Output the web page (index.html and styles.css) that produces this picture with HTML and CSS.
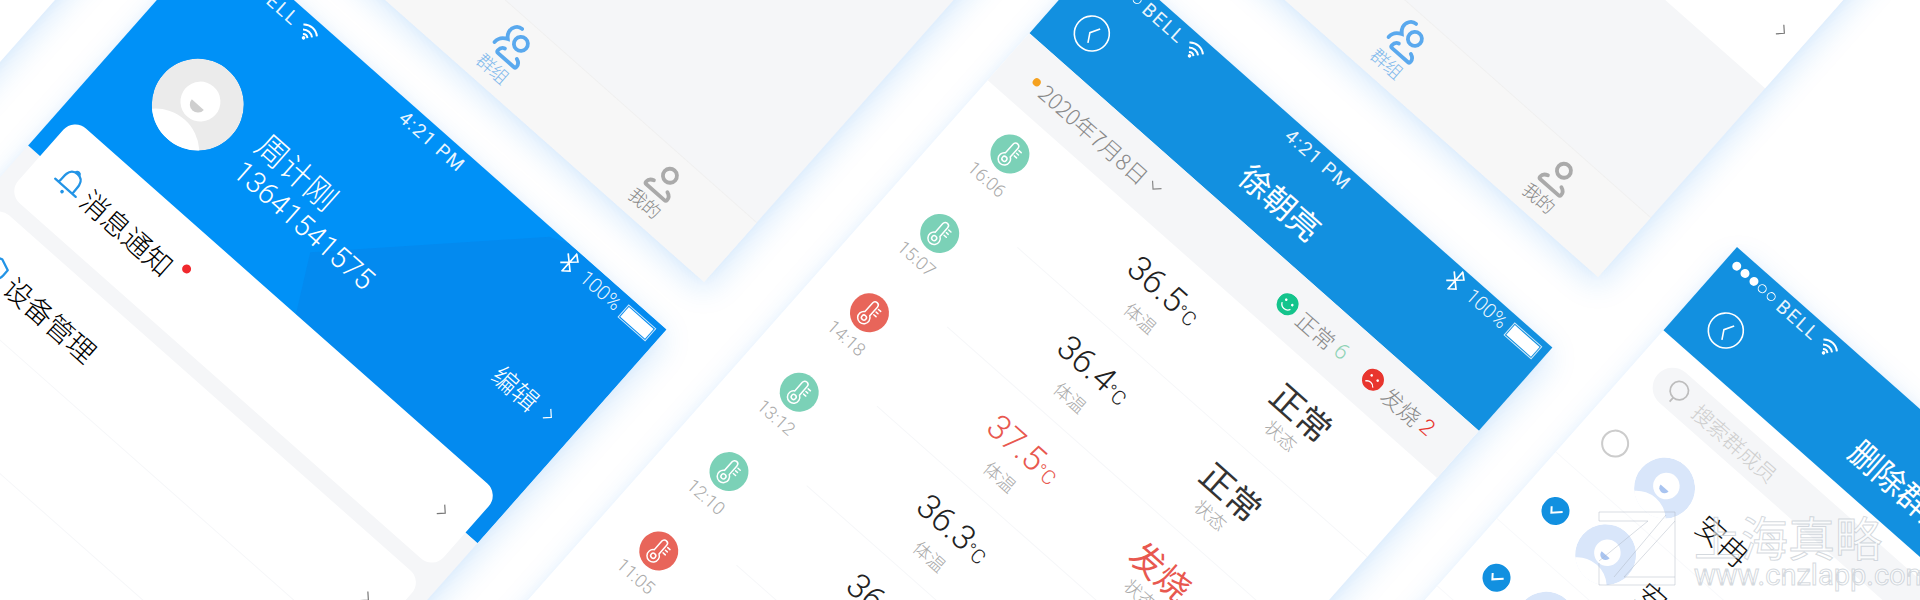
FILE: index.html
```html
<!DOCTYPE html>
<html lang="zh">
<head>
<meta charset="utf-8">
<title>体温监测</title>
<link rel="stylesheet" href="styles.css">
</head>
<body>
<svg class="defs" width="0" height="0" aria-hidden="true">
  <defs>
    <clipPath id="avclip"><circle r="46"/></clipPath>
    <symbol id="avatar" viewBox="-46 -46 92 92">
      <g clip-path="url(#avclip)">
        <circle r="46" fill="currentColor"/>
        <circle cy="64" r="44" fill="#fff"/>
        <circle cy="-4" r="20" fill="#fff"/>
        <path d="M-8 0A8 8 0 0 0 8 0Z" fill="var(--crescent)"/>
      </g>
    </symbol>
    <symbol id="therm" viewBox="-19.500 -19.500 39 39">
      <g fill="none" stroke="#fff" stroke-width="1.500" stroke-linecap="round">
        <path d="M-4.200 -9.500a3.200 3.200 0 0 1 6.400 0V2a6.200 6.200 0 1 1-6.400 0Z"/>
        <circle cx="-1" cy="7.200" r="2.500"/>
        <path d="M4.500 -8.500h3M4.500 -5h2.500M4.500 -1.500h3"/>
      </g>
    </symbol>
    <symbol id="wifi" viewBox="-10 -10 20 20">
      <g fill="none" stroke="#fff" stroke-width="2">
        <path d="M-9 -2A13 13 0 0 1 9 -2M-6 2A9 9 0 0 1 6 2M-3 5.500A4.500 4.500 0 0 1 3 5.500"/>
      </g>
      <circle cy="8" r="1.800" fill="#fff"/>
    </symbol>
    <symbol id="bt" viewBox="-10 -12 20 24">
      <path d="M-7 -6L6 6L0 11V-11L6 -6L-7 6" fill="none" stroke="#fff" stroke-width="1.700"/>
    </symbol>
    <symbol id="back" viewBox="-19 -19 38 38">
      <circle r="17.500" fill="none" stroke="#fff" stroke-width="1.600"/>
      <path d="M3.200 -9L-2 .6L3.200 9.500" fill="none" stroke="#fff" stroke-width="1.600"/>
    </symbol>
    <symbol id="person" viewBox="-18 -18 36 36">
      <g fill="none" stroke="currentColor" stroke-width="3.800" stroke-linecap="round">
        <circle cy="-7" r="7"/>
        <path d="M-9 7C-12 8-14 10.500-14 13Q-14 15-12 15H12Q14 15 14 13C14 10.500 12 8 9 7"/>
      </g>
    </symbol>
    <symbol id="group" viewBox="-18 -18 36 36">
      <g fill="none" stroke="currentColor" stroke-width="3.800" stroke-linecap="round">
        <circle cx="4" cy="-7" r="7"/>
        <path d="M-5 7C-8 8-9 10-9 13Q-9 15-7 15H14Q16 15 16 13C16 10.500 14 8 11 7"/>
        <path d="M-5 -19C-11 -19-14 -13-13 -8C-12 -4-10 -3-9 -2C-14 0-17 4-17 9"/>
      </g>
    </symbol>
    <symbol id="chev" viewBox="0 0 10 14">
      <path d="M2 1L8 7L2 13" fill="none" stroke="currentColor" stroke-width="1.200"/>
    </symbol>
  </defs>
</svg>

<main class="canvas">
  <section class="phone phone-z"></section>

  <section class="phone phone-a">
    <div class="strip-grow"></div>
    <nav class="tabs">
      <div class="tab tab-on">
        <svg class="tab-icon"><use href="#group"/></svg>
        <span>群组</span>
      </div>
      <div class="tab">
        <svg class="tab-icon"><use href="#person"/></svg>
        <span>我的</span>
      </div>
    </nav>
  </section>

  <section class="phone phone-b">
    <div class="card-flat">
      <svg class="chev chev-flat"><use href="#chev"/></svg>
    </div>
    <div class="strip-grow"></div>
    <nav class="tabs">
      <div class="tab tab-on">
        <svg class="tab-icon"><use href="#group"/></svg>
        <span>群组</span>
      </div>
      <div class="tab">
        <svg class="tab-icon"><use href="#person"/></svg>
        <span>我的</span>
      </div>
    </nav>
  </section>

  <section class="phone phone-1">
    <header class="profile-head">
      <div class="status">
        <div class="status-l">
          <i class="dot"></i><i class="dot"></i><i class="dot"></i><i class="dot off"></i><i class="dot off"></i>
          <span class="bell">BELL</span>
          <svg class="wifi"><use href="#wifi"/></svg>
        </div>
        <span class="clock">4:21 PM</span>
        <div class="status-r">
          <svg class="bt"><use href="#bt"/></svg>
          <span class="pct">100%</span>
          <i class="battery"></i>
        </div>
      </div>
      <div class="profile-row">
        <svg class="avatar-big"><use href="#avatar"/></svg>
        <div class="profile-text">
          <div class="profile-name">周计刚</div>
          <div class="profile-phone">13641541575</div>
        </div>
        <div class="edit">编辑<svg class="chev chev-edit"><use href="#chev"/></svg></div>
      </div>
    </header>
    <div class="card card-msg">
      <div class="menu-row">
        <svg class="menu-icon" viewBox="0 0 28 28"><g fill="none" stroke="#2394e6" stroke-width="2" stroke-linecap="round" stroke-linejoin="round"><path d="M2 21H26M6 21C6.500 18 6 14 6.500 11.500C7.200 7.500 10 5 14 5S20.800 7.500 21.500 11.500C22 14 21.500 18 22 21M12 4.500A2.200 2.200 0 0 1 16 4.500"/></g><circle cx="14" cy="25.500" r="1.600" fill="#2394e6"/></svg>
        <span class="menu-label">消息通知<i class="red-dot"></i></span>
        <svg class="chev chev-menu"><use href="#chev"/></svg>
      </div>
    </div>
    <div class="card card-list">
      <div class="menu-row">
        <svg class="menu-icon" viewBox="0 0 28 28"><path d="M14 3L24 7V13C24 19 19 23 14 25C9 23 4 19 4 13V7Z" fill="none" stroke="#2394e6" stroke-width="2" stroke-linejoin="round"/></svg>
        <span class="menu-label">设备管理</span>
        <svg class="chev chev-menu"><use href="#chev"/></svg>
      </div>
      <div class="menu-row"></div>
      <div class="menu-row"></div>
    </div>
  </section>

  <section class="phone phone-2">
    <header class="nav-head">
      <div class="status">
        <div class="status-l">
          <i class="dot"></i><i class="dot"></i><i class="dot"></i><i class="dot off"></i><i class="dot off"></i>
          <span class="bell">BELL</span>
          <svg class="wifi"><use href="#wifi"/></svg>
        </div>
        <span class="clock">4:21 PM</span>
        <div class="status-r">
          <svg class="bt"><use href="#bt"/></svg>
          <span class="pct">100%</span>
          <i class="battery"></i>
        </div>
      </div>
      <div class="nav-row">
        <svg class="back"><use href="#back"/></svg>
        <h1 class="nav-title">徐朝亮</h1>
      </div>
    </header>
    <div class="date-strip">
      <i class="orange"></i>
      <span class="date">2020年7月8日</span>
      <svg class="chev chev-date"><use href="#chev"/></svg>
      <div class="summary">
        <svg class="face" viewBox="-11 -11 22 22"><circle r="11" fill="#14c48c"/><circle cx="-4" cy="-2.500" r="1.300" fill="#fff"/><circle cx="4" cy="-2.500" r="1.300" fill="#fff"/><path d="M-5.500 2A6 6 0 0 0 5.500 2" fill="none" stroke="#fff" stroke-width="1.300"/></svg>
        <span class="sum-label">正常</span><span class="sum-num good">6</span>
        <svg class="face face-2" viewBox="-11 -11 22 22"><circle r="11" fill="#e8352e"/><circle cx="-4" cy="-2.500" r="1.300" fill="#fff"/><circle cx="4" cy="-2.500" r="1.300" fill="#fff"/><path d="M-5 6A6 6 0 0 1 5 6" fill="none" stroke="#fff" stroke-width="1.300"/></svg>
        <span class="sum-label">发烧</span><span class="sum-num bad">2</span>
      </div>
    </div>
    <div class="records">
      <div class="record">
        <div class="when"><svg class="therm ok"><use href="#therm"/></svg><span class="time">16:06</span></div>
        <div class="metric"><div class="value">36.5<small>°C</small></div><div class="cap">体温</div></div>
        <div class="metric"><div class="state">正常</div><div class="cap">状态</div></div>
      </div>
      <div class="record">
        <div class="when"><svg class="therm ok"><use href="#therm"/></svg><span class="time">15:07</span></div>
        <div class="metric"><div class="value">36.4<small>°C</small></div><div class="cap">体温</div></div>
        <div class="metric"><div class="state">正常</div><div class="cap">状态</div></div>
      </div>
      <div class="record">
        <div class="when"><svg class="therm hot"><use href="#therm"/></svg><span class="time">14:18</span></div>
        <div class="metric"><div class="value red">37.5<small>°C</small></div><div class="cap">体温</div></div>
        <div class="metric"><div class="state red">发烧</div><div class="cap">状态</div></div>
      </div>
      <div class="record">
        <div class="when"><svg class="therm ok"><use href="#therm"/></svg><span class="time">13:12</span></div>
        <div class="metric"><div class="value">36.3<small>°C</small></div><div class="cap">体温</div></div>
        <div class="metric"><div class="state">正常</div><div class="cap">状态</div></div>
      </div>
      <div class="record">
        <div class="when"><svg class="therm ok"><use href="#therm"/></svg><span class="time">12:10</span></div>
        <div class="metric"><div class="value">36.5<small>°C</small></div><div class="cap">体温</div></div>
        <div class="metric"><div class="state">正常</div><div class="cap">状态</div></div>
      </div>
      <div class="record">
        <div class="when"><svg class="therm hot"><use href="#therm"/></svg><span class="time">11:05</span></div>
        <div class="metric"><div class="value red">37.5<small>°C</small></div><div class="cap">体温</div></div>
        <div class="metric"><div class="state red">发烧</div><div class="cap">状态</div></div>
      </div>
    </div>
  </section>

  <section class="phone phone-3">
    <header class="nav-head">
      <div class="status">
        <div class="status-l">
          <i class="dot"></i><i class="dot"></i><i class="dot"></i><i class="dot off"></i><i class="dot off"></i>
          <span class="bell">BELL</span>
          <svg class="wifi"><use href="#wifi"/></svg>
        </div>
        <span class="clock"></span>
        <div class="status-r"></div>
      </div>
      <div class="nav-row">
        <svg class="back"><use href="#back"/></svg>
        <h1 class="nav-title">删除群成员</h1>
      </div>
    </header>
    <div class="search">
      <svg class="search-icon" viewBox="0 0 24 24"><circle cx="12" cy="10" r="8.500" fill="none" stroke="#bdbdbd" stroke-width="1.600"/><path d="M12 18.500v5" stroke="#bdbdbd" stroke-width="1.600"/></svg>
      <span>搜索群成员</span>
    </div>
    <div class="member">
      <i class="radio"></i>
      <svg class="avatar-sm"><use href="#avatar"/></svg>
      <span class="member-name">安冉</span>
    </div>
    <div class="member">
      <svg class="radio-on" viewBox="-14 -14 28 28"><circle r="14" fill="#1290e0"/><path d="M-6 -1L-2 4L6 -4" fill="none" stroke="#fff" stroke-width="2"/></svg>
      <svg class="avatar-sm"><use href="#avatar"/></svg>
      <span class="member-name">安冉</span>
    </div>
    <div class="member">
      <svg class="radio-on" viewBox="-14 -14 28 28"><circle r="14" fill="#1290e0"/><path d="M-6 -1L-2 4L6 -4" fill="none" stroke="#fff" stroke-width="2"/></svg>
      <svg class="avatar-sm"><use href="#avatar"/></svg>
      <span class="member-name">安冉</span>
    </div>
  </section>

  <aside class="watermark">
    <svg class="wm-logo" viewBox="0 0 78 75"><g fill="none" stroke="#aab4c0" stroke-opacity=".45" stroke-width="1"><path d="M1 1H77V74H1V52M1 1V10H50L1 50"/><path d="M68 4L16 66M77 10L26 66M26 66H77"/></g></svg>
    <div class="wm-text">
      <div class="wm-cn">上海真略</div>
      <div class="wm-en">www.cnzlapp.com</div>
    </div>
  </aside>
</main>
</body>
</html>
```

FILE: styles.css
```css
* { box-sizing: border-box; }
html, body { margin: 0; padding: 0; background: #fff; }
body {
  font-family: "Noto Sans CJK SC", "Noto Sans", sans-serif;
  font-weight: 300;
  width: 1920px;
  height: 600px;
  overflow: hidden;
}
.defs { position: absolute; }
symbol { overflow: visible; }
.canvas { position: relative; width: 1920px; height: 600px; overflow: hidden; background: #fff; }

.phone {
  position: absolute;
  width: 600px;
  transform-origin: 0 0;
  transform: rotate(41.5deg);
  background: #fff;
  box-shadow: 7px 7px 30px rgba(20, 130, 240, .17), 0 0 12px rgba(20, 130, 240, .03);
  display: flex;
  flex-direction: column;
}
.phone-z { left: -195px; top: -623px; height: 900px; }
.phone-a { left: 586px; top: -490px; height: 500px; background: #f5f6f8; }
.phone-b { left: 1480px; top: -495px; height: 500px; background: #f5f6f8; }
.phone-1 { left: 217px; top: -68px; height: 1300px; background: #f5f6f8; }
.phone-2 { left: 1103px; top: -50px; height: 1300px; }
.phone-3 { left: 1737px; top: 247px; height: 1000px; }

/* tab bars of the two upper screens */
.strip-grow { flex: 1; }
.card-flat {
  height: 248px;
  background: #fff;
  display: flex;
  justify-content: flex-end;
  align-items: flex-end;
  padding: 0 20px 47px 0;
}
.tabs {
  height: 80px;
  background: #f7f7f7;
  border-top: 1px solid #f0f0f0;
  display: grid;
  grid-template-columns: 199px 203px 203px;
  padding-top: 11px;
}
.tab {
  display: flex;
  flex-direction: column;
  align-items: center;
  color: #888;
  font-size: 18px;
  line-height: 22px;
}
.tab:first-child { grid-column: 2; }
.tab-on { color: #7fb9ec; }
.tab-icon { width: 36px; height: 36px; color: #aaa; overflow: visible; }
.tab-on .tab-icon { color: #5aa9ee; }

/* status bar */
.status {
  height: 28px;
  display: grid;
  grid-template-columns: 1fr auto 1fr;
  align-items: center;
  color: rgba(255, 255, 255, .92);
  font-family: Roboto, sans-serif;
  font-weight: 400;
  font-size: 19px;
  padding: 0 8px 0 8px;
}
.status-l, .status-r { display: flex; align-items: center; }
.status-r { justify-content: flex-end; }
.dot { width: 9px; height: 9px; border-radius: 50%; background: #fff; margin-right: 2.400px; }
.dot.off { background: none; border: 1px solid #fff; }
.bell { margin-left: 4px; letter-spacing: 1.800px; }
.wifi { width: 20px; height: 20px; margin-left: 6px; }
.clock { letter-spacing: 1.600px; }
.bt { width: 20px; height: 24px; }
.pct { font-weight: 300; font-size: 20px; margin: 0 8px 0 8px; }
.battery {
  width: 33px;
  height: 13px;
  background: #fff;
  outline: 1px solid rgba(255, 255, 255, .8);
  outline-offset: 1px;
  margin-right: 2px;
}

/* phone 1: profile */
.profile-head {
  height: 285px;
  flex: none;
  background: #0091f7;
  position: relative;
  overflow: hidden;
}
.profile-head::before {
  content: "";
  position: absolute;
  inset: 0;
  background: #038aef;
  clip-path: polygon(282px 178px, 451px 8px, 470px 0, 600px 0, 600px 285px, 340px 285px);
}
.profile-head > * { position: relative; }
.profile-row {
  margin-top: 68px;
  height: 92px;
  display: flex;
  align-items: center;
  padding: 0 26px 0 54px;
  color: #fff;
}
.avatar-big { width: 92px; height: 92px; color: #ebebeb; --crescent: #cfcfcf; flex: none; }
.profile-text { margin-left: 25px; flex: 1; }
.profile-name { font-size: 32px; line-height: 40px; }
.profile-phone { font-family: Roboto, sans-serif; font-weight: 300; font-size: 29px; line-height: 34px; }
.edit { font-size: 26px; display: flex; align-items: center; }
.chev { color: #fff; }
.chev-edit { width: 10px; height: 14px; margin-left: 12px; }

.card { background: #fff; margin: 0 16px; border-radius: 16px; position: relative; }
.card-msg { margin-top: -51px; }
.card-list { margin-top: 16px; }
.menu-row {
  height: 100px;
  display: flex;
  align-items: center;
  padding: 0 26px 0 24px;
  border-bottom: 1px solid #f6f7f9;
}
.card-msg .menu-row { border-bottom: 0; }
.menu-icon { width: 32px; height: 32px; flex: none; }
.menu-label { margin-left: 4px; font-size: 28px; font-weight: 300; color: #000; flex: 1; display: flex; }
.red-dot { width: 9px; height: 9px; border-radius: 50%; background: #f0282d; margin: 4px 0 0 8px; }
.chev-menu { width: 10px; height: 14px; color: #777; }
.chev-flat { width: 10px; height: 14px; color: #777; }

/* nav header */
.nav-head { height: 111px; flex: none; background: #1290e0; color: #fff; }
.nav-row {
  height: 83px;
  display: grid;
  grid-template-columns: 1fr auto 1fr;
  align-items: center;
}
.back { width: 38px; height: 38px; margin-left: 28px; }
.nav-title { margin: 0; font-size: 32px; font-weight: 400; line-height: 40px; }

/* phone 2: records */
.date-strip {
  height: 63px;
  flex: none;
  background: #f5f6f8;
  display: flex;
  align-items: center;
  padding-left: 34px;
  color: #888;
}
.orange { width: 8px; height: 8px; border-radius: 50%; background: #f5a11f; flex: none; }
.date { font-size: 22px; margin-left: 5px; }
.chev-date { width: 10px; height: 14px; color: #888; transform: rotate(90deg); margin-left: 7px; }
.summary { display: flex; align-items: center; margin-left: 161px; }
.face { width: 22px; height: 22px; flex: none; }
.face-2 { margin-left: 25px; }
.sum-label { font-size: 22px; margin-left: 6px; line-height: 30px; }
.sum-num { font-family: Roboto, sans-serif; font-weight: 300; font-size: 22px; margin-left: 5px; }
.good { color: #8fd3b6; }
.bad { color: #e8352e; }

.record {
  height: 106px;
  display: grid;
  grid-template-columns: 130px 284px 82px;
  padding-bottom: 26px;
  position: relative;
}
.record::after {
  content: "";
  position: absolute;
  left: 133px;
  right: 0;
  bottom: 0;
  border-bottom: 1px solid #f6f7f9;
}
.when { display: flex; flex-direction: column; align-items: center; padding-top: 21px; }
.therm { width: 39px; height: 39px; border-radius: 50%; flex: none; }
.therm.ok { background: #7bd1b7; }
.therm.hot { background: #e8655a; }
.time { font-family: Roboto, sans-serif; font-weight: 300; font-size: 18px; color: #aaa; line-height: 20px; margin-top: 5px; }
.metric { display: flex; flex-direction: column; align-items: center; padding-top: 16px; }
.value { font-family: Roboto, sans-serif; font-weight: 300; font-size: 34px; line-height: 48px; color: #222; white-space: nowrap; }
.value small { font-size: 20px; }
.state { font-size: 34px; line-height: 48px; color: #333; font-weight: 400; white-space: nowrap; }
.value.red, .state.red { color: #e8584f; }
.cap { font-size: 18px; line-height: 24px; color: #aaa; margin-top: -5px; }

/* phone 3: members */
.search {
  margin: 17px 25px 0;
  height: 40px;
  border-radius: 20px;
  background: #f5f6f8;
  display: flex;
  align-items: center;
  padding-left: 14px;
  font-size: 21px;
  color: #cfcfcf;
  flex: none;
}
.search-icon { width: 26px; height: 26px; }
.search span { margin-left: 11px; }
.member {
  height: 89.500px;
  display: flex;
  align-items: center;
  padding-left: 25px;
  border-bottom: 1px solid #f8f9fb;
  flex: none;
}
.search + .member { margin-top: 16px; }
.radio { width: 28px; height: 28px; border-radius: 50%; border: 2px solid #ccc; flex: none; }
.radio-on { width: 28px; height: 28px; flex: none; }
.avatar-sm { width: 61px; height: 61px; margin-left: 22px; color: #d9e6fa; --crescent: #a9c4f0; flex: none; }
.member-name { margin-left: 18px; font-size: 30px; color: #111; font-weight: 300; }

/* watermark */
.watermark {
  position: absolute;
  left: 1598px;
  top: 511px;
  display: flex;
  gap: 18px;
}
.wm-logo { width: 78px; height: 75px; flex: none; }
.wm-cn {
  font-size: 47px;
  line-height: 50px;
  font-weight: 400;
  color: rgba(255, 255, 255, .6);
  -webkit-text-stroke: 1px rgba(170, 180, 190, .5);
  white-space: nowrap;
}
.wm-en {
  font-family: Roboto, sans-serif;
  font-weight: 400;
  font-size: 29px;
  line-height: 28px;
  color: rgba(255, 255, 255, .6);
  -webkit-text-stroke: 1px rgba(170, 180, 190, .5);
  white-space: nowrap;
}
```
